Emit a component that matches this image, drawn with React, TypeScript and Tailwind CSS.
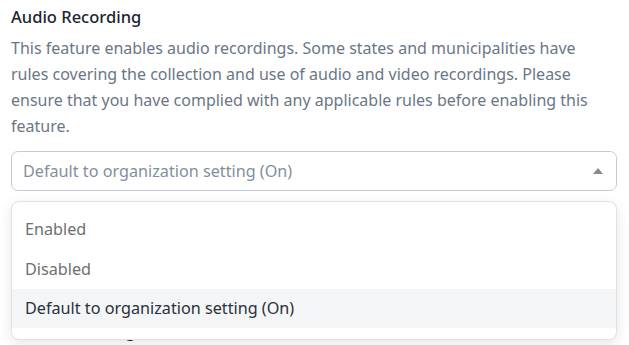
export default function App() {
  const options = ['Enabled', 'Disabled', 'Default to organization setting (On)']
  const selected = 2

  return (
    <div
      className="min-h-screen bg-white pl-[11px] pr-[12px] pt-[5px]"
      style={{ fontFamily: '"Noto Sans", "Open Sans", sans-serif' }}
    >
      <h2 className="text-[16.5px] leading-[24px] font-medium text-[#1d2530]">Audio Recording</h2>
      <p className="mt-[6px] text-[16px] leading-[26px] text-[#6b7686]">
        This feature enables audio recordings. Some states and municipalities have rules covering
        the collection and use of audio and video recordings. Please ensure that you have complied
        with any applicable rules before enabling this feature.
      </p>

      <div className="relative mt-[12px]">
        <button className="flex h-[40px] w-full items-center justify-between rounded-[7px] border border-[#c3ccd6] bg-white pl-[11px] pr-[12px] text-left text-[16.2px] text-[#858f9c]">
          <span>Default to organization setting (On)</span>
          <svg width="10" height="6" viewBox="0 0 10 6" className="mr-[1px]">
            <path d="M0 6 L5 0 L10 6 Z" fill="#8a8a8a" />
          </svg>
        </button>

        <ul className="absolute left-0 right-0 top-[50px] z-10 overflow-hidden rounded-[8px] border border-[#dfe2e6] bg-white pt-[7px] pb-[11px] shadow-[0_4px_14px_rgba(0,0,0,0.10)]">
          {options.map((opt, i) => (
            <li
              key={opt}
              className={
                i === selected
                  ? 'flex h-[39px] items-center bg-[#f4f5f7] pl-[13px] text-[16.2px] text-[#2a313b]'
                  : 'flex h-[40px] items-center pl-[13px] text-[16.2px] text-[#6f6f6f]'
              }
            >
              {opt}
            </li>
          ))}
        </ul>
      </div>

      <h2 className="mt-[128px] pl-[0px] text-[16px] leading-[24px] font-medium text-[#1d2530]">Video Recording</h2>
    </div>
  )
}
